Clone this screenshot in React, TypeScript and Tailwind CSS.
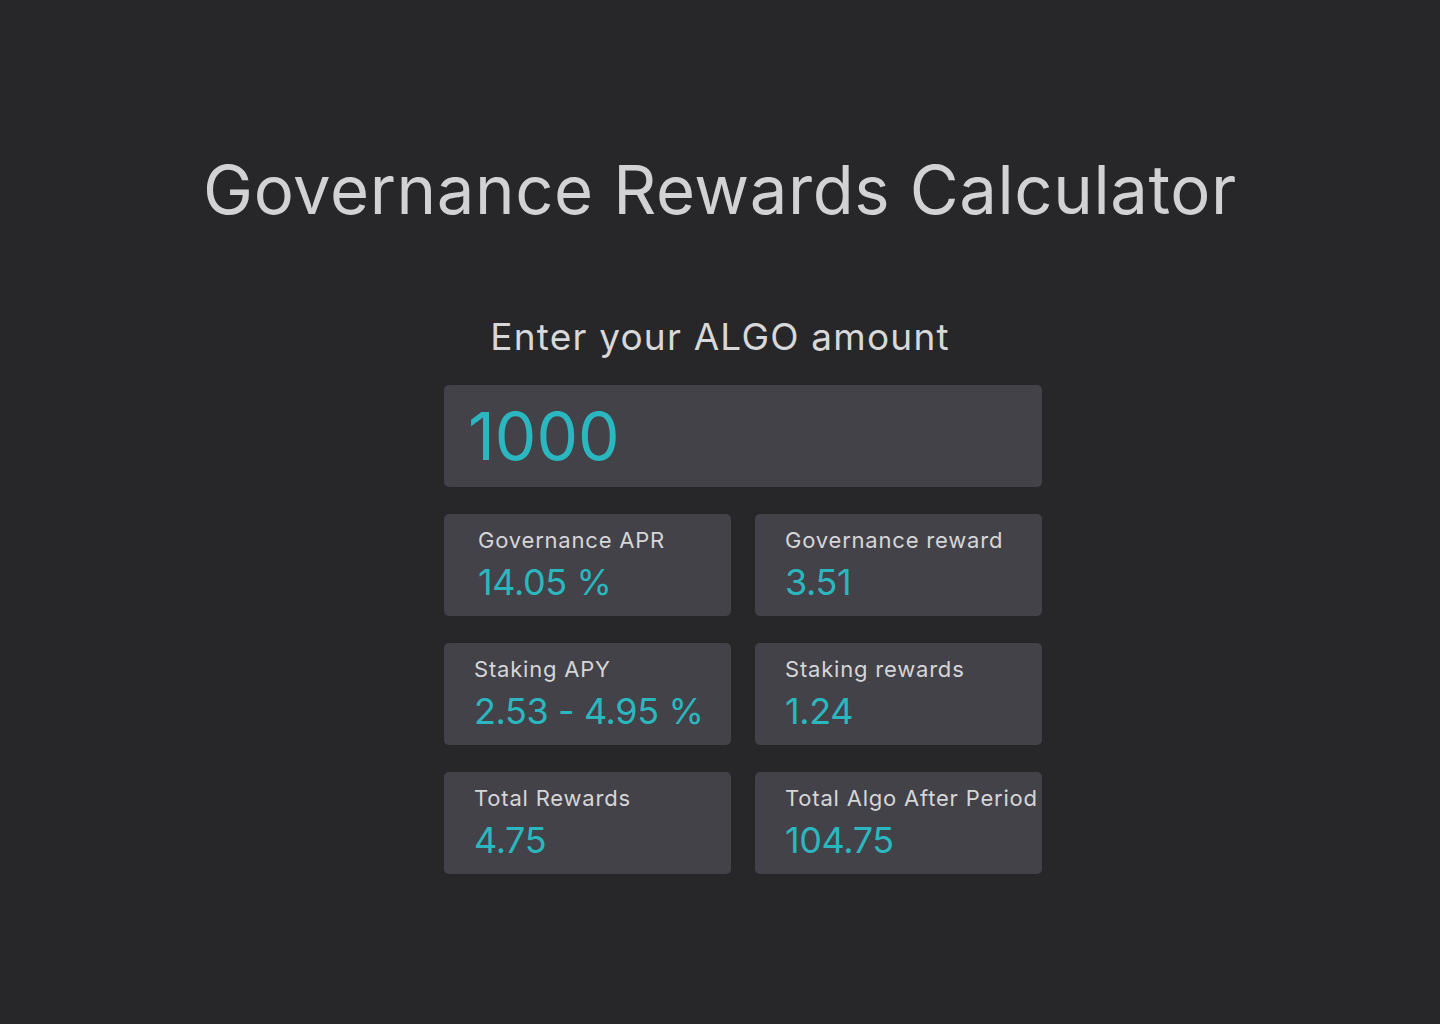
import { useState } from "react";

const stats = [
  { label: "Governance APR", value: "14.05 %", first: true },
  { label: "Governance reward", value: "3.51" },
  { label: "Staking APY", value: "2.53 - 4.95 %" },
  { label: "Staking rewards", value: "1.24" },
  { label: "Total Rewards", value: "4.75" },
  { label: "Total Algo After Period", value: "104.75" },
];

export default function App() {
  const [amount, setAmount] = useState("1000");

  return (
    <main
      className="min-h-screen w-full bg-[#272729] flex flex-col items-center"
      style={{ fontFamily: "Inter, 'Noto Sans', sans-serif" }}
    >
      <h1 className="mt-[148px] text-[67px] leading-[84px] font-normal text-[#d2d2d4] tracking-[0.6px]">
        Governance Rewards Calculator
      </h1>

      <p className="mt-[82px] text-[37px] leading-[46px] text-[#d8d8da] tracking-[1.2px]">
        Enter your ALGO amount
      </p>

      <div className="mt-[25px] ml-[46px] w-[598px] flex flex-col gap-[27px]">
        <div className="h-[102px] rounded-[5px] bg-[#434248] flex items-center px-[24px]">
          <input
            value={amount}
            onChange={(e) => setAmount(e.target.value)}
            className="w-full bg-transparent outline-none text-[66px] leading-[80px] text-[#2bb7bf]"
            style={{ fontFamily: "inherit" }}
          />
        </div>

        <div className="grid grid-cols-2 gap-x-[24px] gap-y-[27px]">
          {stats.map((s) => (
            <div
              key={s.label}
              className={
                "h-[102px] rounded-[5px] bg-[#434248] flex flex-col pt-[12px] whitespace-nowrap " +
                (s.first ? "pl-[34px]" : "pl-[30px]")
              }
            >
              <span className="text-[22px] leading-[28px] text-[#d6d6d8] tracking-[0.8px]">{s.label}</span>
              <span className="mt-[6px] text-[36px] leading-[44px] text-[#2bb7bf] tracking-[-0.4px]">
                {s.value}
              </span>
            </div>
          ))}
        </div>
      </div>
    </main>
  );
}
